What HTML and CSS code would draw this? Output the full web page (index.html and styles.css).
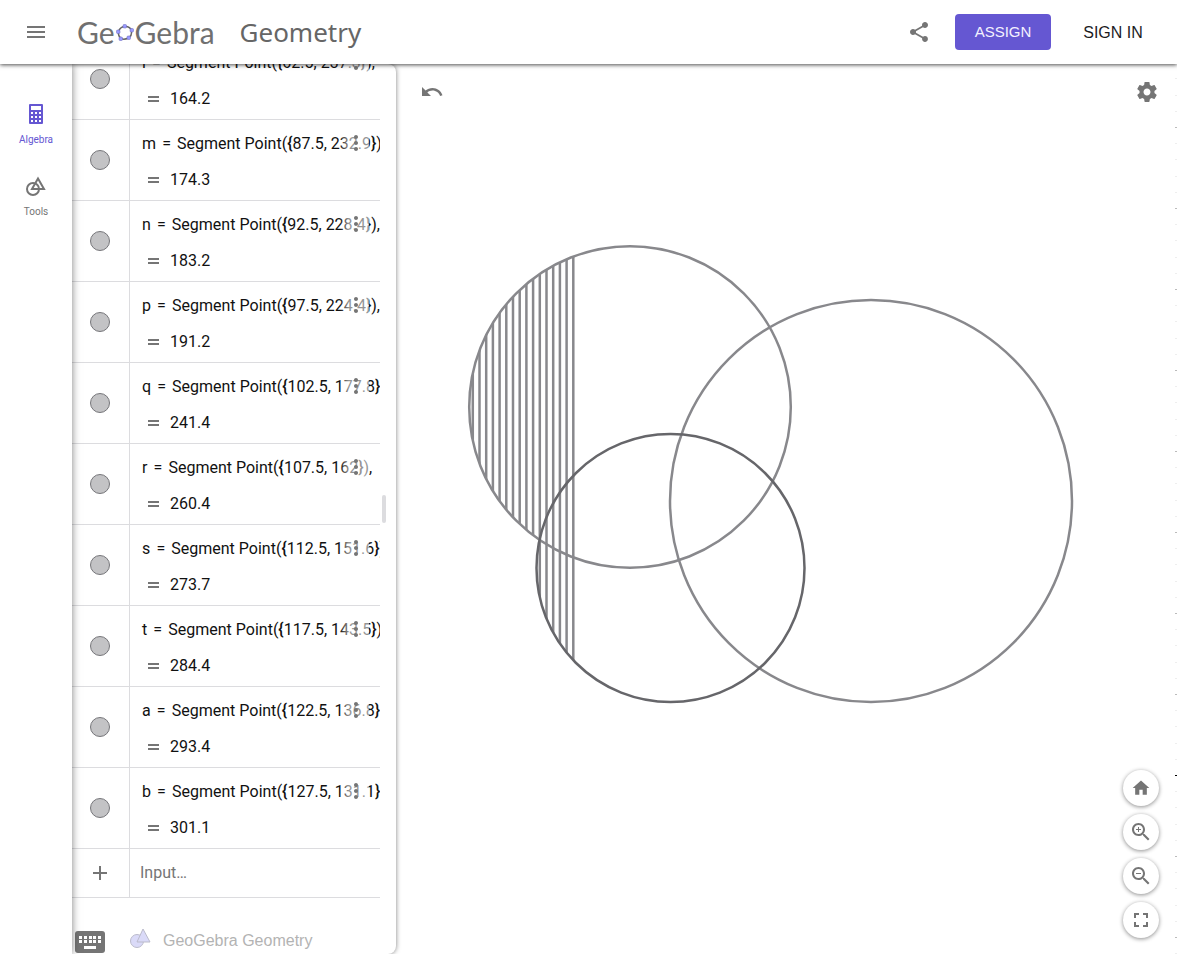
FILE: index.html
```
<!DOCTYPE html>
<html lang="en">
<head>
<meta charset="utf-8">
<title>Geometry - GeoGebra</title>
<link rel="stylesheet" href="styles.css">
</head>
<body>
<header class="topbar">
  <button class="icon-btn" aria-label="Menu"><svg width="24" height="24" viewBox="0 0 24 24"><path d="M3 18h18v-2H3zm0-5h18v-2H3zm0-7v2h18V6z"/></svg></button>
  <a class="logo" href="#"><span>Ge</span><svg width="20" height="20" viewBox="0 0 20 20"><path d="M9.500 4.500Q15 4 16.500 8.500Q17 14 13.500 16Q9 18 6 16.500Q3 14 3.500 9.500Q5 5 9.500 4.500z" class="logo-ring"/><g class="logo-dots"><rect x="8" y="2.500" width="3.500" height="3.500" rx="1"/><rect x="15" y="6.500" width="3.500" height="3.500" rx="1"/><rect x="12" y="14" width="3.500" height="3.500" rx="1"/><rect x="4" y="15" width="3.500" height="3.500" rx="1"/><rect x="1.500" y="8" width="3.500" height="3.500" rx="1"/></g></svg><span>Gebra</span></a>
  <h1 class="title">Geometry</h1>
  <div class="actions">
    <button class="icon-btn" aria-label="Share"><svg width="24" height="24" viewBox="0 0 24 24"><path d="M18 16.080c-.76 0-1.440.3-1.960.77L8.910 12.700c.05-.23.09-.46.09-.7s-.04-.47-.09-.7l7.050-4.110c.54.5 1.250.81 2.040.81 1.660 0 3-1.340 3-3s-1.340-3-3-3-3 1.340-3 3c0 .24.04.47.09.7L8.040 9.810C7.500 9.310 6.790 9 6 9c-1.660 0-3 1.340-3 3s1.340 3 3 3c.79 0 1.500-.31 2.040-.81l7.120 4.160c-.05.21-.08.43-.08.65 0 1.610 1.310 2.920 2.920 2.920s2.920-1.310 2.920-2.920-1.310-2.920-2.920-2.920z"/></svg></button>
    <button class="assign">ASSIGN</button>
    <button class="signin">SIGN IN</button>
  </div>
</header>
<main class="workspace">
  <nav class="rail">
    <button class="rail-item active"><svg width="24" height="24" viewBox="0 0 24 24"><path fill-rule="evenodd" d="M6 2h12q1 0 1 1v18q0 1-1 1H6q-1 0-1-1V3q0-1 1-1zm1 2v4h10V4zm0 6v2h2v-2zm4 0v2h2v-2zm4 0v2h2v-2zm-8 4v2h2v-2zm4 0v2h2v-2zm4 0v2h2v-2zm-8 4v2h2v-2zm4 0v2h2v-2zm4 0v2h2v-2z"/></svg><span>Algebra</span></button>
    <button class="rail-item"><svg width="24" height="24" viewBox="0 0 24 24" class="outline"><circle cx="9" cy="15" r="6"/><path d="M14 4.500 L20 15H8z"/></svg><span>Tools</span></button>
  </nav>
  <section class="panel" aria-label="Algebra">
    <div class="rows" id="rows"></div>
    <div class="row input-row">
      <div class="marker"><svg width="24" height="24" viewBox="0 0 24 24"><path d="M19 13h-6v6h-2v-6H5v-2h6V5h2v6h6z"/></svg></div>
      <input class="entry" type="text" placeholder="Input…" aria-label="Input">
    </div>
    <footer class="panel-foot">
      <button class="keyboard" aria-label="Open keyboard"><svg width="30" height="22" viewBox="0 0 30 22"><rect width="30" height="22" rx="3" fill="#757575"/><g fill="#fff"><path d="M4 5h3v3H4zM9 5h3v3H9zM14 5h3v3h-3zM18 5h3v3h-3zM23 5h3v3h-3zM4 9h3v3H4zM9 9h3v3H9zM14 9h3v3h-3zM18 9h3v3h-3zM23 9h3v3h-3zM9 15h12v3H9z"/></g></svg></button>
      <svg width="24" height="24" viewBox="0 0 24 24" class="brand-icon"><circle cx="8" cy="15" r="6.500"/><path d="M14 3l7 13H8z"/></svg>
      <span>GeoGebra Geometry</span>
    </footer>
    <div class="scroll-thumb"></div>
  </section>
  <section class="canvas" aria-label="Graphics">
    <svg class="drawing" width="100%" height="100%">
      <defs><clipPath id="shade"><circle cx="234" cy="342" r="161"/><circle cx="274.500" cy="503" r="134"/></clipPath></defs>
      <g clip-path="url(#shade)"><path id="hatch" class="hatch"/></g>
      <circle class="ring" cx="234" cy="342" r="160.800"/>
      <circle class="ring" cx="475" cy="436" r="201"/>
      <circle class="ring dark" cx="274.500" cy="503" r="134"/>
    </svg>
    <svg class="axis" width="2" height="100%"><path id="minor" class="minor"/><path id="major" class="major"/><path class="zero" d="M0 710.500h2"/></svg>
    <div class="canvas-top">
      <button class="icon-btn" aria-label="Undo"><svg width="24" height="24" viewBox="0 0 24 24"><path d="M12.500 8c-2.650 0-5.050.99-6.900 2.600L2 7v9h9l-3.620-3.620c1.390-1.160 3.160-1.880 5.120-1.880 3.540 0 6.550 2.310 7.600 5.500l2.370-.78C21.080 11.030 17.150 8 12.500 8z"/></svg></button>
      <button class="icon-btn" aria-label="Settings"><svg width="24" height="24" viewBox="0 0 24 24"><path d="M19.430 12.980c.04-.32.07-.64.07-.98s-.03-.66-.07-.98l2.110-1.650c.19-.15.24-.42.12-.64l-2-3.460c-.12-.22-.39-.3-.61-.22l-2.490 1c-.52-.4-1.080-.73-1.690-.98l-.38-2.650C14.460 2.180 14.250 2 14 2h-4c-.25 0-.46.18-.49.42l-.38 2.650c-.61.25-1.170.59-1.690.98l-2.490-1c-.23-.09-.49 0-.61.22l-2 3.460c-.13.22-.07.49.12.64l2.110 1.650c-.04.32-.07.65-.07.98s.03.66.07.98l-2.110 1.650c-.19.15-.24.42-.12.64l2 3.460c.12.22.39.3.61.22l2.490-1c.52.4 1.080.73 1.690.98l.38 2.650c.03.24.24.42.49.42h4c.25 0 .46-.18.49-.42l.38-2.650c.61-.25 1.170-.59 1.690-.98l2.490 1c.23.09.49 0 .61-.22l2-3.460c.12-.22.07-.49-.12-.64zM12 15.500c-1.930 0-3.500-1.570-3.500-3.500s1.570-3.500 3.500-3.500 3.500 1.570 3.500 3.500-1.570 3.500-3.500 3.500z"/></svg></button>
    </div>
    <div class="zoom-tools">
      <button class="round" aria-label="Standard view"><svg width="20" height="20" viewBox="0 0 24 24"><path d="M10 20v-6h4v6h5v-8h3L12 3 2 12h3v8z"/></svg></button>
      <button class="round" aria-label="Zoom in"><svg width="24" height="24" viewBox="0 0 24 24"><path d="M15.500 14h-.79l-.28-.27C15.410 12.590 16 11.110 16 9.500 16 5.910 13.090 3 9.500 3S3 5.910 3 9.500 5.910 16 9.500 16c1.610 0 3.090-.59 4.230-1.570l.27.28v.79l5 4.990L20.490 19zm-6 0C7.010 14 5 11.990 5 9.500S7.010 5 9.500 5 14 7.010 14 9.500 11.990 14 9.500 14zM12 10h-2v2H9v-2H7V9h2V7h1v2h2z"/></svg></button>
      <button class="round" aria-label="Zoom out"><svg width="24" height="24" viewBox="0 0 24 24"><path d="M15.500 14h-.79l-.28-.27C15.410 12.590 16 11.110 16 9.500 16 5.910 13.090 3 9.500 3S3 5.910 3 9.500 5.910 16 9.500 16c1.610 0 3.090-.59 4.230-1.570l.27.28v.79l5 4.990L20.490 19zm-6 0C7.010 14 5 11.990 5 9.500S7.010 5 9.500 5 14 7.010 14 9.500 11.990 14 9.500 14zM7 9h5v1H7z"/></svg></button>
      <button class="round" aria-label="Fullscreen"><svg width="24" height="24" viewBox="0 0 24 24"><path d="M7 14H5v5h5v-2H7zm-2-4h2V7h3V5H5zm12 7h-3v2h5v-5h-2zM14 5v2h3v3h2V5z"/></svg></button>
    </div>
  </section>
</main>
<script src="app.js"></script>
</body>
</html>
```

FILE: styles.css
```
* { box-sizing: border-box; }
body { margin: 0; height: 100vh; display: flex; flex-direction: column; overflow: hidden; background: #fff; font-family: Roboto, "Liberation Sans", sans-serif; color: #1c1c1f; }
button { border: 0; padding: 0; background: none; font: inherit; color: inherit; cursor: pointer; }
svg { display: block; fill: #757575; flex: none; }

.topbar { display: flex; align-items: center; height: 64px; flex: none; padding: 0 18px; position: relative; z-index: 3; background: #fff; box-shadow: 0 1px 4px rgba(0,0,0,.7); }
.icon-btn { display: grid; place-items: center; width: 36px; height: 36px; }
.logo { display: flex; align-items: center; margin-left: 23px; font: 400 30px/36px Lato, sans-serif; color: #707070; text-decoration: none; }
.logo-ring { fill: none; stroke: #666; stroke-width: 1.500; }
.logo-dots { fill: #99f; stroke: #66b; stroke-width: .5; }
.title { margin: 0 0 0 25px; font: 400 26px/36px "Noto Sans", sans-serif; color: #666; }
.actions { display: flex; align-items: center; margin-left: auto; font: 16px/20px "Liberation Sans", sans-serif; }
.assign { width: 96px; height: 36px; margin-left: 18px; border-radius: 4px; background: #6557d2; color: #f3f1ff; font-size: 15px; }
.signin { width: 92px; height: 36px; margin-left: 16px; padding-top: 2px; }

.workspace { flex: 1; min-height: 0; display: flex; }
.rail { width: 72px; flex: none; padding-top: 38px; display: flex; flex-direction: column; gap: 32px; position: relative; z-index: 2; background: #fff; box-shadow: 0 0 8px rgba(0,0,0,.5); clip-path: inset(0 -12px 0 0); }
.rail-item { display: flex; flex-direction: column; align-items: center; gap: 8px; height: 40px; font-size: 10px; line-height: 12px; color: #757575; }
.rail-item.active { color: #6557d2; }
.rail-item.active svg { fill: #6557d2; }
.rail-item .outline { fill: none; stroke: #757575; stroke-width: 2; }

.panel { width: 324px; flex: none; display: flex; flex-direction: column; position: relative; z-index: 1; background: #fff; border-radius: 0 8px 8px 0; box-shadow: 0 0 5px rgba(0,0,0,.5); }
.rows { flex: 1; min-height: 0; display: flex; flex-direction: column; justify-content: flex-end; overflow: hidden; margin-right: 16px; }
.row { display: flex; flex: none; height: 81px; border-bottom: 1px solid #dcdcdf; position: relative; }
.marker { width: 58px; flex: none; display: grid; place-items: center; border-right: 1px solid #dcdcdf; padding-right: 1px; }
.dot { width: 20px; height: 20px; border: 1px solid #76767a; border-radius: 50%; background: #c3c3c5; }
.content { flex: 1; min-width: 0; overflow: hidden; padding: 10px 0 0 12px; font-size: 16px; line-height: 28px; color: #111; white-space: nowrap; }
.formula { display: flex; gap: 4px; }
.formula > span { flex: none; }
.relation { width: 13px; text-align: center; }
.call b { font-weight: 500; }
.value { display: flex; gap: 11px; margin-top: 8px; padding-left: 6px; align-items: center; }
.equals { width: 11px; height: 6px; border: solid #757575; border-width: 2px 0; }
.more { position: absolute; top: 8px; right: 11px; width: 29px; height: 30px; padding-left: 4px; display: grid; align-items: center; justify-items: start; background: linear-gradient(to right, rgba(255,255,255,0), rgba(255,255,255,.55) 30%); }
.input-row { height: 49px; margin-right: 16px; }
.entry { flex: 1; min-width: 0; border: 0; outline: 0; padding: 0 10px; font: 16px/24px Roboto, sans-serif; background: none; }
.entry::placeholder { color: #757575; opacity: 1; }
.panel-foot { height: 56px; flex: none; display: flex; align-items: flex-end; padding: 0 0 1px 3px; font: 16px/24px "Liberation Sans", sans-serif; color: #b3b3b3; }
.brand-icon { margin: 0 10px 3px 24px; fill: #dadaf8; stroke: #bbbbcb; }
.scroll-thumb { position: absolute; right: 10px; top: 431px; width: 4px; height: 28px; border-radius: 2px; background: #dcdcdf; }

.canvas { flex: 1; min-width: 0; margin-top: 1px; position: relative; display: flex; flex-direction: column; justify-content: space-between; }
.drawing { position: absolute; left: 0; top: 0; fill: none; }
.hatch { stroke: #88888c; stroke-width: 2.500; }
.ring { fill: none; stroke: #88888c; stroke-width: 2.500; }
.ring.dark { stroke: #66666a; }
.axis { position: absolute; right: 0; top: 0; }
.minor { stroke: #eee; }
.major { stroke: #bbb; }
.zero { stroke: #000; }
.canvas-top { display: flex; justify-content: space-between; padding: 9px 12px 0 18px; position: relative; }
.zoom-tools { display: flex; flex-direction: column; gap: 8px; align-self: flex-end; padding: 0 18px 16px 0; position: relative; }
.round { display: grid; place-items: center; width: 36px; height: 36px; border-radius: 50%; background: #fff; box-shadow: 0 1px 4px rgba(0,0,0,.45); }
```

FILE: app.js
```
const segments = [
  ['l', '62.5, 237.3', '164.2'],
  ['m', '87.5, 232.9', '174.3'],
  ['n', '92.5, 228.4', '183.2'],
  ['p', '97.5, 224.4', '191.2'],
  ['q', '102.5, 177.8', '241.4'],
  ['r', '107.5, 162', '260.4'],
  ['s', '112.5, 151.6', '273.7'],
  ['t', '117.5, 143.5', '284.4'],
  ['a', '122.5, 136.8', '293.4'],
  ['b', '127.5, 131.1', '301.1']
];
document.getElementById('rows').innerHTML = segments.map(([name, point, value]) => `
  <div class="row">
    <div class="marker"><button class="dot" aria-label="Show or hide ${name}"></button></div>
    <div class="content">
      <div class="formula"><span>${name}</span><span class="relation">=</span><span>Segment</span><span class="call">Point(<b>{</b>${point}<b>}</b>),</span></div>
      <div class="value"><span class="equals"></span><span>${value}</span></div>
    </div>
    <button class="more" aria-label="Options"><svg width="24" height="24" viewBox="0 0 24 24"><path d="M12 8c1.100 0 2-.9 2-2s-.9-2-2-2-2 .9-2 2 .9 2 2 2zm0 2c-1.100 0-2 .9-2 2s.9 2 2 2 2-.9 2-2-.9-2-2-2zm0 6c-1.100 0-2 .9-2 2s.9 2 2 2 2-.9 2-2-.9-2-2-2z"/></svg></button>
  </div>`).join('');

// Vertical segments, five units apart
let hatch = '';
for (let i = 0; i < 16; i++) hatch += `M${76.8 + i * 6.7} 150V660`;
document.getElementById('hatch').setAttribute('d', hatch);

// Axis ticks: every fifth one is major
let minor = '', major = '';
for (let i = -43; i <= 14; i++) {
  const tick = `M0 ${Math.round(710 + i * 16.2) + 0.5}h2`;
  if (i % 5) minor += tick; else if (i) major += tick;
}
document.getElementById('minor').setAttribute('d', minor);
document.getElementById('major').setAttribute('d', major);
```
